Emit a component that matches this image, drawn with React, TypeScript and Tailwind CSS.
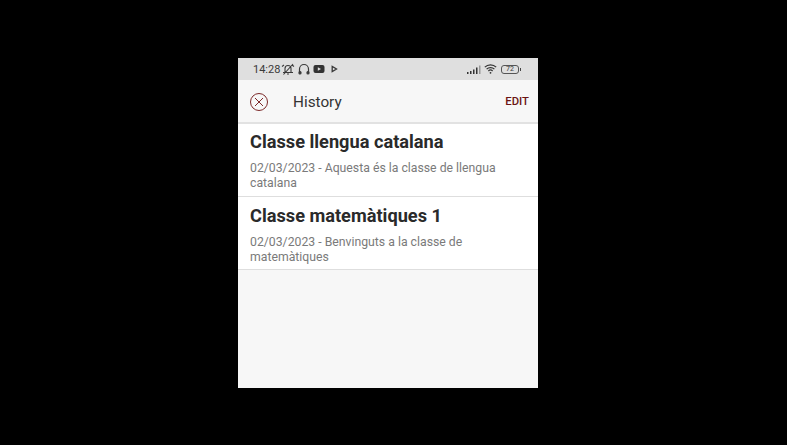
import React from "react";

const items = [
  {
    title: "Classe llengua catalana",
    body: "02/03/2023 - Aquesta és la classe de llengua catalana",
  },
  {
    title: "Classe matemàtiques 1",
    body: "02/03/2023 - Benvinguts a la classe de matemàtiques",
  },
];

const StatusBar = () => (
  <div className="h-[22px] bg-[#dfdfdf] flex items-center pl-[15px] pr-[17px] text-[#3a3a3a]">
    <span className="text-[11px] leading-none">14:28</span>
    <svg width="14" height="14" viewBox="0 0 14 14" className="ml-[1px]" fill="none" stroke="#3a3a3a" strokeWidth="1.1">
      <path d="M4 10.5V6.5a3 3 0 0 1 6 0v4M2 10.5h10M6 12h2M2.5 12.5 12 2M1 4.5 3 3M13 4.5 11 3" />
    </svg>
    <svg width="12" height="12" viewBox="0 0 12 12" className="ml-[3px]" fill="none" stroke="#3a3a3a" strokeWidth="1.2">
      <path d="M1.5 9V6a4.5 4.5 0 0 1 9 0v3" />
      <rect x="1" y="8.5" width="2" height="2.5" rx="1" fill="#3a3a3a" />
      <rect x="9" y="8.5" width="2" height="2.5" rx="1" fill="#3a3a3a" />
    </svg>
    <svg width="12" height="10" viewBox="0 0 12 10" className="ml-[3px]">
      <rect x="0.5" y="1" width="11" height="8" rx="2" fill="#333" />
      <path d="M4.8 3.2v3.6L8 5z" fill="#dfdfdf" />
    </svg>
    <svg width="7" height="8" viewBox="0 0 7 8" className="ml-[6px]" fill="none" stroke="#3a3a3a" strokeWidth="1.3">
      <path d="M1.2 1.5v5L5.5 4z" />
    </svg>
    <div className="ml-auto flex items-center">
      <svg width="14" height="9" viewBox="0 0 14 9" fill="#333">
        <rect x="0" y="7" width="1.5" height="2" />
        <rect x="3" y="6" width="1.5" height="3" />
        <rect x="6" y="4.5" width="1.5" height="4.5" />
        <rect x="9" y="2.5" width="1.5" height="6.5" />
        <rect x="12" y="0.5" width="1.5" height="8.5" fill="#999" />
      </svg>
      <svg width="13" height="10" viewBox="0 0 13 10" className="ml-[3px]" fill="none" stroke="#333" strokeWidth="1.2">
        <path d="M0.8 3.2a8 8 0 0 1 11.4 0M2.6 5.2a5.4 5.4 0 0 1 7.8 0M4.4 7a3 3 0 0 1 4.2 0" />
        <circle cx="6.5" cy="8.8" r="0.9" fill="#333" stroke="none" />
      </svg>
      <div className="ml-[4px] w-[18px] h-[9px] border border-[#555] rounded-[3px] flex items-center justify-center text-[7px] leading-none">
        72
      </div>
      <div className="w-[1px] h-[3px] ml-[1px] bg-[#444]" />
    </div>
  </div>
);

export default function App() {
  return (
    <div
      className="w-[787px] h-[445px] bg-black pl-[238px] pt-[58px] overflow-hidden"
      style={{ fontFamily: "Roboto, sans-serif" }}
    >
      <div className="w-[300px] h-[330px] bg-[#f7f7f7] flex flex-col">
        <StatusBar />
        <div className="h-[44px] flex items-center pt-[2px] pl-[11px] pr-[9px] border-b-2 border-[#e2e2e2]">
          <svg width="20" height="20" viewBox="0 0 20 20" fill="none" stroke="#7d2a2a" strokeWidth="1">
            <circle cx="10" cy="10" r="8.5" />
            <path d="M6 6l8 8M14 6l-8 8" />
          </svg>
          <span className="ml-[24px] text-[15.3px] text-[#333]">History</span>
          <span className="ml-auto text-[11.3px] font-medium text-[#6b1414]">EDIT</span>
        </div>
        <div className="bg-white border-b border-[#dedede] px-[12px] pt-[6px] pb-[5px]">
          <div className="text-[18.2px] leading-[24px] font-bold text-[#2a2a2a]">{items[0].title}</div>
          <div className="mt-[7px] text-[12.25px] leading-[15px] text-[#7a7a7a]">{items[0].body}</div>
        </div>
        <div className="bg-white border-b border-[#dedede] px-[12px] pt-[7px] pb-[4px]">
          <div className="text-[18.2px] leading-[24px] font-bold text-[#2a2a2a]">{items[1].title}</div>
          <div className="mt-[7px] text-[12.25px] leading-[15px] text-[#7a7a7a]">{items[1].body}</div>
        </div>
      </div>
    </div>
  );
}
